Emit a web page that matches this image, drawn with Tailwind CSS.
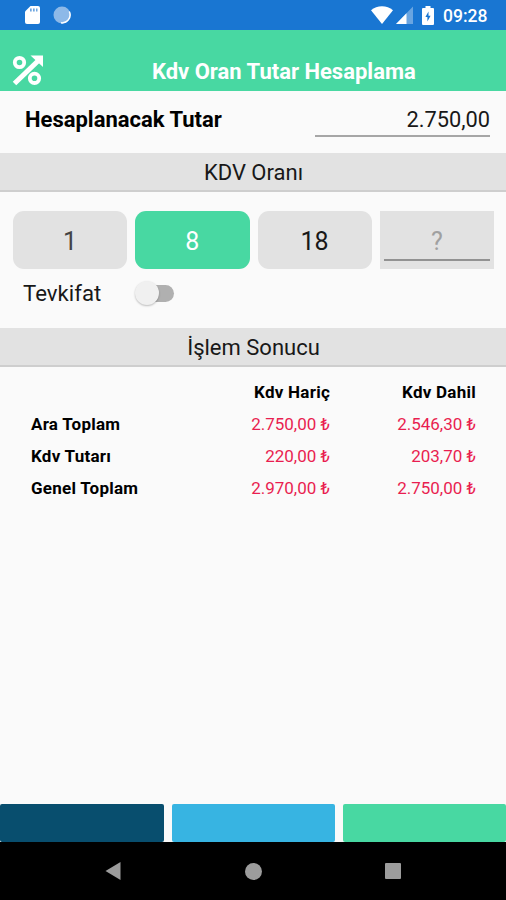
<!DOCTYPE html>
<html lang="tr">
  <head>
    <meta charset="UTF-8" />
    <meta name="viewport" content="width=device-width, initial-scale=1.0" />
    <title>Kdv Oran Tutar Hesaplama</title>
    <script src="https://cdn.jsdelivr.net/npm/@tailwindcss/browser@4"></script>
  </head>

  <body
    class="flex h-[900px] w-[506px] flex-col overflow-hidden bg-[#fafafa] font-['Roboto',sans-serif] text-[#181818]"
  >
    <!-- status bar -->
    <div class="flex h-[30px] shrink-0 items-center bg-[#1976d2] pr-[18px] pl-[25px] text-white">
      <svg class="h-[18px] w-[15px]" viewBox="0 0 15 18">
        <path d="M5.500 0H13a2 2 0 0 1 2 2v14a2 2 0 0 1-2 2H2a2 2 0 0 1-2-2V5.500z" fill="#fff" />
        <path d="M5 2.500h1.700v3H5zM8 2.500h1.700v3H8zM11 2.500h1.500v3H11z" fill="#6ea6e0" />
      </svg>
      <svg class="ml-[13px] h-[18px] w-[18px]" viewBox="0 0 18 18">
        <circle cx="9" cy="9" r="8.500" fill="#8db9e8" />
        <path d="M16.300 5.500A8 8 0 0 1 8 16.800" fill="none" stroke="#fff" stroke-width="1.500" />
      </svg>
      <svg class="ml-auto h-[18px] w-[22px]" viewBox="0 0 22 18" fill="currentColor">
        <path d="M11 18 0 4.200C3 1.600 7 .3 11 .3s8 1.300 11 3.900z" />
      </svg>
      <svg class="ml-[3px] h-[18px] w-[17px]" viewBox="0 0 17 18" fill="currentColor">
        <path d="M17 .5V18H0z" fill-opacity=".35" />
        <path d="M10.500 7.200V18H0z" />
      </svg>
      <svg class="ml-[9px] h-[19px] w-[12px]" viewBox="0 0 12 19">
        <path d="M3.500 0h5v2H11a1 1 0 0 1 1 1v15a1 1 0 0 1-1 1H1a1 1 0 0 1-1-1V3a1 1 0 0 1 1-1h2.500z" fill="#fff" />
        <path d="M6.500 5.500 3.400 11h2v4.500L8.600 9.800H6.500z" fill="#1976d2" />
      </svg>
      <span class="mt-[3px] ml-[9px] w-[45px] text-[17.500px] leading-none font-medium whitespace-nowrap">09:28</span>
    </div>

    <!-- title bar -->
    <header class="flex h-[61px] shrink-0 bg-[#48d8a2] pl-[12px] text-white">
      <svg class="mt-[25px] h-[31px] w-[32px]" viewBox="0 0 32 31" fill="none" stroke="currentColor">
        <path d="M2.500 28.500 27 5" stroke-width="5" />
        <path d="M18.500.500H31v11.500z" fill="currentColor" stroke="none" />
        <circle cx="7.500" cy="7.500" r="4.700" stroke-width="3.800" />
        <circle cx="22.500" cy="23.300" r="4.700" stroke-width="3.800" />
      </svg>
      <h1 class="mt-[27px] ml-[108px] text-[22px] leading-[30px] font-bold whitespace-nowrap">
        Kdv Oran Tutar Hesaplama
      </h1>
    </header>

    <!-- amount -->
    <div class="flex h-[62px] shrink-0 justify-between pr-[16px] pl-[25px]">
      <span class="mt-[14px] text-[22px] leading-[30px] font-bold text-black">Hesaplanacak Tutar</span>
      <div class="mt-[14px] h-[32px] w-[175px] border-b-2 border-[#a6a6a6] text-right text-[21.800px] leading-[30px]">
        2.750,00
      </div>
    </div>

    <h2 class="h-[39px] shrink-0 border-b-2 border-[#cecece] bg-[#e2e2e2] pl-px text-center text-[22px] leading-[40px]">
      KDV Oranı
    </h2>

    <!-- rates -->
    <div class="mt-[19px] grid h-[58px] shrink-0 grid-cols-4 grid-rows-[58px] gap-[8px] pr-[12px] pl-[13px] text-center text-[25px] leading-[62px]">
      <button class="rounded-[11px] bg-[#e2e2e2] leading-[58px] pt-[2px] text-[#444]">1</button>
      <button class="rounded-[11px] bg-[#48d8a2] leading-[58px] pt-[2px] text-white">8</button>
      <button class="rounded-[11px] bg-[#e2e2e2] leading-[58px] pt-[2px]">18</button>
      <div class="bg-[#e2e2e2] px-[4px] text-[#a0a0a0]">
        <div class="h-[50px] border-b-2 border-[#929292]">?</div>
      </div>
    </div>

    <!-- withholding switch -->
    <div class="flex h-[59px] shrink-0 pl-[23px]">
      <span class="mt-[9px] w-[112px] text-[22.200px] leading-[30px]">Tevkifat</span>
      <div class="relative mt-[16px] ml-[5px] h-[17px] w-[34px] rounded-full bg-[#b0b0b0]">
        <div class="absolute top-[-4px] left-[-5px] size-[24px] rounded-full bg-[#f0f0f0] shadow-[0_1px_2px_rgba(0,0,0,0.25)]"></div>
      </div>
    </div>

    <h2 class="h-[39px] shrink-0 border-b-2 border-[#cecece] bg-[#e2e2e2] pl-px text-center text-[22px] leading-[40px]">
      İşlem Sonucu
    </h2>

    <!-- results -->
    <div class="mt-[9px] grid shrink-0 grid-cols-[153px_146px_146px] pl-[31px] text-[17px] leading-[32px] whitespace-nowrap">
      <span></span>
      <span class="text-right font-bold tracking-[0.25px] text-black">Kdv Hariç</span>
      <span class="text-right font-bold tracking-[0.25px] text-black">Kdv Dahil</span>
      <span class="font-bold tracking-[0.25px] text-black">Ara Toplam</span>
      <span class="text-right text-[#e91e50]">2.750,00 ₺</span>
      <span class="text-right text-[#e91e50]">2.546,30 ₺</span>
      <span class="font-bold tracking-[0.25px] text-black">Kdv Tutarı</span>
      <span class="text-right text-[#e91e50]">220,00 ₺</span>
      <span class="text-right text-[#e91e50]">203,70 ₺</span>
      <span class="font-bold tracking-[0.25px] text-black">Genel Toplam</span>
      <span class="text-right text-[#e91e50]">2.970,00 ₺</span>
      <span class="text-right text-[#e91e50]">2.750,00 ₺</span>
    </div>

    <!-- bottom buttons -->
    <div class="mt-auto grid h-[38px] shrink-0 grid-cols-[164px_163.500px_163.500px] gap-[7.500px]">
      <button class="rounded-[2px] bg-[#084e6e]"></button>
      <button class="rounded-[2px] bg-[#37b4e2]"></button>
      <button class="rounded-[2px] bg-[#48d8a2]"></button>
    </div>

    <!-- navigation bar -->
    <nav class="flex h-[58px] shrink-0 items-center bg-black pl-[105px] text-[#9c9c9c]">
      <svg class="h-[18px] w-[16px]" viewBox="0 0 16 18" fill="currentColor">
        <path d="M15.500 0v18L.5 9z" />
      </svg>
      <div class="ml-[124px] size-[17px] rounded-full bg-[#9c9c9c]"></div>
      <div class="ml-[123px] size-[16px] rounded-[1px] bg-[#9c9c9c]"></div>
    </nav>
  </body>
</html>
